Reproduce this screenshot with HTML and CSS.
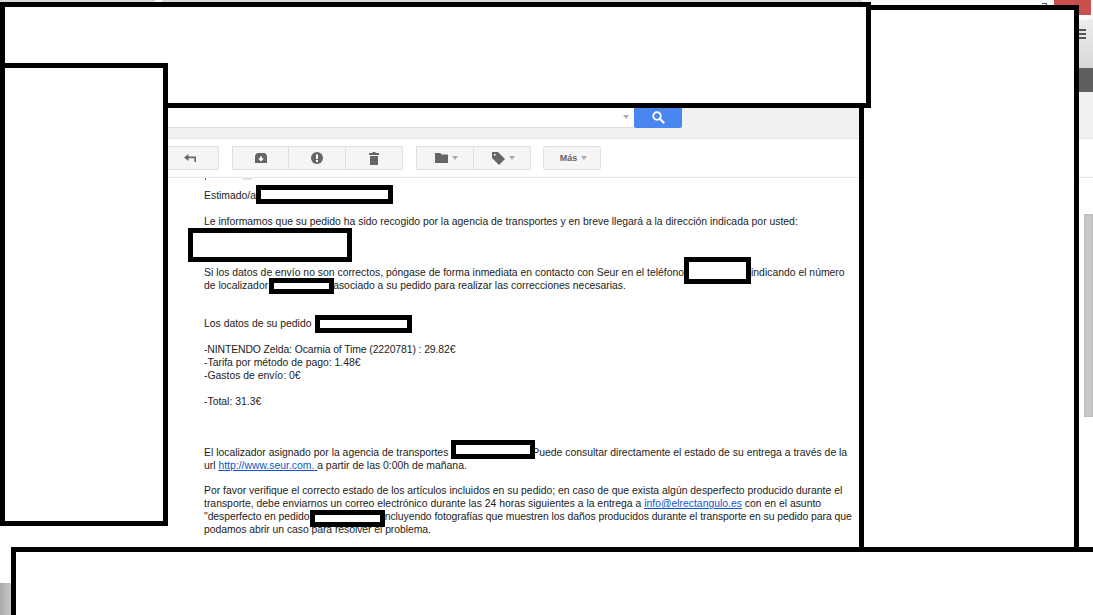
FILE: index.html
```html
<!DOCTYPE html>
<html lang="en">
<head>
    <meta charset="utf-8">
    <meta name="viewport" content="width=device-width, initial-scale=1">
    <title>Gmail</title>
    <link rel="stylesheet" href="styles.css">
</head>
<body>
    <div class="page">
        <div class="tabstrip">
            <span class="tab tab-first"></span>
            <span class="tab tab-second"></span>
        </div>
        <div class="columns">
            <div class="mail">
                <div class="searchband">
                    <div class="searchbox"><span class="caret"></span></div>
                    <div class="searchbtn">
                        <svg width="13" height="13" viewBox="0 0 13 13"><circle cx="5" cy="5" r="3.8" fill="none" stroke="#fff" stroke-width="1.8"/><path d="M7.8 7.8l4.4 4.4" stroke="#fff" stroke-width="2.2"/></svg>
                    </div>
                </div>
                <div class="toolbar">
                    <div class="btn btn-reply">
                        <svg width="12" height="8" viewBox="0 0 12 8"><path d="M4.5 0v2.5H12V8h-1.6V4.2H4.5V7L0 3.5z" fill="#666"/></svg>
                    </div>
                    <div class="group group-actions">
                        <div class="btn seg">
                            <svg width="12" height="10" viewBox="0 0 12 10"><path d="M2 0h8l2 2.5V10H0V2.5z" fill="#666"/><path d="M5 3.5h2v2h2l-3 3-3-3h2z" fill="#fff"/></svg>
                        </div>
                        <div class="btn seg">
                            <svg width="12" height="12" viewBox="0 0 12 12"><circle cx="6" cy="6" r="6" fill="#666"/><path d="M5 2.5h2v4.5H5zM5 8h2v2H5z" fill="#fff"/></svg>
                        </div>
                        <div class="btn seg">
                            <svg width="10" height="13" viewBox="0 0 10 13"><path d="M3.5 0h3v1H10v2H0V1h3.5zM1 4h8v9H1z" fill="#666"/></svg>
                        </div>
                    </div>
                    <div class="group group-labels">
                        <div class="btn seg">
                            <svg width="13" height="10" viewBox="0 0 13 10"><path d="M0 0h5.5l1 1.5H13V10H0z" fill="#666"/></svg>
                            <span class="caret"></span>
                        </div>
                        <div class="btn seg">
                            <svg width="13" height="13" viewBox="0 0 13 13"><path d="M0 0h6l7 7-6 6-7-7z" fill="#666"/><circle cx="2.8" cy="2.8" r="1" fill="#eee"/></svg>
                            <span class="caret"></span>
                        </div>
                    </div>
                    <div class="btn btn-more">Más <span class="caret"></span></div>
                </div>
                <div class="message">
                    <div class="cutoff"><span class="cut-dot"></span><span class="cut-bar"></span></div>
                    <p>Estimado/a</p>
                    <p class="blank"></p>
                    <p>Le informamos que su pedido ha sido recogido por la agencia de transportes y en breve llegará a la dirección indicada por usted:</p>
                    <p class="blank"></p>
                    <p class="blank"></p>
                    <p class="blank"></p>
                    <p>Si los datos de envío no son correctos, póngase de forma inmediata en contacto con Seur en el teléfono<span class="gap gap-phone"></span>indicando el número</p>
                    <p>de localizador<span class="gap gap-loc"></span>asociado a su pedido para realizar las correcciones necesarias.</p>
                    <p class="blank"></p>
                    <p class="blank"></p>
                    <p>Los datos de su pedido</p>
                    <p class="blank"></p>
                    <p class="tight">-NINTENDO Zelda: Ocarnia of Time (2220781) : 29.82€</p>
                    <p>-Tarifa por método de pago: 1.48€</p>
                    <p>-Gastos de envío: 0€</p>
                    <p class="blank"></p>
                    <p>-Total: 31.3€</p>
                    <p class="blank"></p>
                    <p class="blank"></p>
                    <p class="blank"></p>
                    <p>El localizador asignado por la agencia de transportes<span class="gap gap-agency"></span>Puede consultar directamente el estado de su entrega a través de la</p>
                    <p>url <a href="#">http://www.seur.com. </a> a partir de las 0:00h de mañana.</p>
                    <p class="blank"></p>
                    <p>Por favor verifique el correcto estado de los artículos incluidos en su pedido; en caso de que exista algún desperfecto producido durante el</p>
                    <p>transporte, debe enviarnos un correo electrónico durante las 24 horas siguientes a la entrega a <a href="#">info@elrectangulo.es</a> con en el asunto</p>
                    <p class="tight-sm">"desperfecto en pedido<span class="gap gap-issue"></span>incluyendo fotografías que muestren los daños producidos durante el transporte en su pedido para que</p>
                    <p class="tight-sm">podamos abrir un caso para resolver el problema.</p>
                </div>
            </div>
            <div class="side">
                <span class="winicon"></span>
                <span class="closebtn"></span>
                <div class="side-head">
                    <span class="menu"></span>
                </div>
                <div class="side-dark"></div>
                <div class="side-band"></div>
                <div class="side-toolbar"></div>
                <div class="scrollbar"><div class="thumb"></div></div>
            </div>
        </div>

        <div class="photo"></div>

        <!-- censored areas on top of the screenshot -->
        <div class="redact r-right"></div>
        <div class="redact r-top"></div>
        <div class="redact r-left"></div>
        <div class="redact r-bottom"></div>
        <div class="redact r-name"></div>
        <div class="redact r-address"></div>
        <div class="redact r-phone"></div>
        <div class="redact r-loc"></div>
        <div class="redact r-order"></div>
        <div class="redact r-agency"></div>
        <div class="redact r-issue"></div>
    </div>
</body>
</html>
```

FILE: styles.css
```css
* {
    margin: 0;
    padding: 0;
    box-sizing: border-box;
}
body {
    font-family: "Liberation Sans", Arial, sans-serif;
    background: #fff;
    color: #222;
}
.page {
    position: relative;
    width: 1093px;
    height: 615px;
    overflow: hidden;
}
.tabstrip {
    display: flex;
    gap: 7px;
    height: 2px;
    background: #fafafa;
}
.tab {
    height: 2px;
    background: #d9d9d9;
}
.tab-first {
    width: 155px;
}
.tab-second {
    width: 700px;
}
.columns {
    display: flex;
    height: 613px;
}
.mail {
    width: 860px;
    padding-top: 100px;
}
.searchband {
    display: flex;
    height: 37px;
    padding: 5px 0 0 168px;
    background: #f1f1f1;
    border-bottom: 1px solid #e5e5e5;
    align-items: flex-start;
}
.searchbox {
    display: flex;
    align-items: center;
    justify-content: flex-end;
    width: 466px;
    height: 21px;
    padding-right: 5px;
    background: #fff;
    border-bottom: 1px solid #d9d9d9;
}
.searchbtn {
    display: flex;
    align-items: center;
    justify-content: center;
    width: 48px;
    height: 21px;
    background: #4a86f0;
    border-radius: 0 0 2px 2px;
}
.toolbar {
    display: flex;
    align-items: center;
    gap: 13px;
    height: 39px;
    padding-left: 160px;
    border-bottom: 1px solid #e5e5e5;
}
.btn {
    display: flex;
    align-items: center;
    justify-content: center;
    gap: 4px;
    height: 24px;
    background: #f5f5f5;
    border: 1px solid #e0e0e0;
    border-radius: 2px;
    font-size: 9px;
    font-weight: bold;
    color: #666;
}
.btn-reply {
    width: 59px;
}
.group {
    display: flex;
}
.group .seg {
    border-radius: 0;
}
.group-actions .seg {
    width: 57px;
}
.group-labels .seg {
    width: 57.5px;
    padding-left: 3px;
}
.seg + .seg {
    border-left: 0;
}
.btn-more {
    width: 58px;
    margin-left: -1px;
    padding-left: 3px;
}
.caret {
    display: inline-block;
    border: 3px solid transparent;
    border-top: 4px solid #aaa;
    border-bottom: 0;
}
.message {
    padding: 10px 0 0 204px;
    font-size: 10.4px;
    line-height: 12.85px;
    white-space: nowrap;
}
.tight {
    letter-spacing: -0.1px;
}
.tight-sm {
    letter-spacing: -0.05px;
}
.cutoff {
    display: flex;
    gap: 37px;
    height: 2px;
    margin: -10px 0 10px 1px;
}
.cut-dot {
    width: 1px;
    height: 2px;
    background: #777;
}
.cut-bar {
    width: 9px;
    height: 2px;
    background: #e2e2e2;
}
.blank {
    height: 12.85px;
}
.gap {
    display: inline-block;
}
.gap-phone {
    width: 67px;
}
.gap-loc {
    width: 65px;
}
.gap-agency {
    width: 84px;
}
.gap-issue {
    width: 73px;
}
a {
    color: #15c;
}
.side {
    position: relative;
    flex: 1;
}
.side-head {
    display: flex;
    flex-direction: column;
    align-items: flex-end;
    height: 66px;
    background: linear-gradient(#fafafa 0 17px, #ececec 18px, #d8d8d8);
}
.winicon {
    position: absolute;
    right: 46px;
    top: 1px;
    width: 5px;
    height: 4px;
    border-top: 1px solid #555;
    border-right: 1px solid #555;
}
.closebtn {
    position: absolute;
    right: 2px;
    top: -2px;
    width: 37px;
    height: 15px;
    background: #c9504f;
}
.menu {
    width: 7px;
    height: 10px;
    margin: 27px 7px 0 0;
    background: repeating-linear-gradient(#555 0 2px, transparent 2px 4px);
}
.side-dark {
    height: 24px;
    background: #5f5f5f;
}
.side-band {
    height: 47px;
    background: #f1f1f1;
    border-bottom: 1px solid #e5e5e5;
}
.side-toolbar {
    height: 39px;
    border-bottom: 1px solid #e5e5e5;
}
.scrollbar {
    display: flex;
    justify-content: flex-end;
    padding-top: 36px;
}
.thumb {
    width: 9px;
    height: 203px;
    background: #c8c8c8;
    border: 1px solid #bdbdbd;
}
.photo {
    position: absolute;
    left: 0;
    top: 583px;
    width: 11px;
    height: 32px;
    background: linear-gradient(90deg, #aaa, #c8c8c8);
}
.redact {
    position: absolute;
    background: #fff;
    border: 5px solid #000;
}
.r-top {
    left: 0;
    top: 2px;
    width: 871px;
    height: 106px;
}
.r-left {
    left: 0;
    top: 63px;
    width: 168px;
    height: 463px;
}
.r-right {
    left: 859px;
    top: 5px;
    width: 220px;
    height: 547px;
}
.r-bottom {
    left: 11px;
    top: 547px;
    width: 1090px;
    height: 80px;
}
.r-name {
    left: 256px;
    top: 185px;
    width: 137px;
    height: 19px;
}
.r-address {
    left: 188px;
    top: 228px;
    width: 164px;
    height: 34px;
}
.r-phone {
    left: 684px;
    top: 257px;
    width: 67px;
    height: 27px;
}
.r-loc {
    left: 269px;
    top: 278px;
    width: 65px;
    height: 16px;
}
.r-order {
    left: 315px;
    top: 315px;
    width: 97px;
    height: 18px;
}
.r-agency {
    left: 451px;
    top: 440px;
    width: 84px;
    height: 19px;
}
.r-issue {
    left: 310px;
    top: 510px;
    width: 75px;
    height: 17px;
}
```
